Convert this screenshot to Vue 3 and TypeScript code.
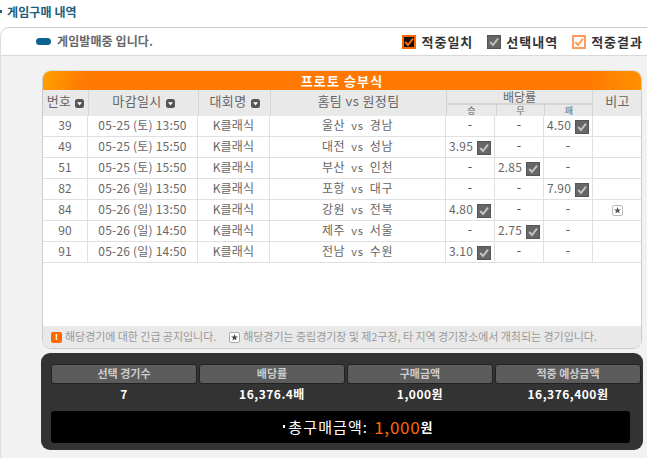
<script setup lang="ts">
interface Row { no: number; date: string; home: string; away: string; win: string; draw: string; lose: string; star?: boolean }
const rows: Row[] = [
  { no: 39, date: '05-25 (토) 13:50', home: '울산', away: '경남', win: '', draw: '', lose: '4.50' },
  { no: 49, date: '05-25 (토) 15:50', home: '대전', away: '성남', win: '3.95', draw: '', lose: '' },
  { no: 51, date: '05-25 (토) 15:50', home: '부산', away: '인천', win: '', draw: '2.85', lose: '' },
  { no: 82, date: '05-26 (일) 13:50', home: '포항', away: '대구', win: '', draw: '', lose: '7.90' },
  { no: 84, date: '05-26 (일) 13:50', home: '강원', away: '전북', win: '4.80', draw: '', lose: '', star: true },
  { no: 90, date: '05-26 (일) 14:50', home: '제주', away: '서울', win: '', draw: '2.75', lose: '' },
  { no: 91, date: '05-26 (일) 14:50', home: '전남', away: '수원', win: '3.10', draw: '', lose: '' },
]
const legend = [
  { label: '적중일치', kind: 'match' },
  { label: '선택내역', kind: 'picked' },
  { label: '적중결과', kind: 'result' },
]
const sortable = [
  { label: '번호', cls: 'h-no' },
  { label: '마감일시', cls: 'h-date' },
  { label: '대회명', cls: 'h-league' },
]
const summary = [
  { label: '선택 경기수', value: '7' },
  { label: '배당률', value: '16,376.4배' },
  { label: '구매금액', value: '1,000원' },
  { label: '적중 예상금액', value: '16,376,400원' },
]
</script>

<template>
  <div class="page">
    <h1 class="title"><span class="title-dot"></span>게임구매 내역</h1>
    <section class="panel">
      <div class="status">
        <div class="status-left"><span class="pill"></span><span class="status-text">게임발매중 입니다.</span></div>
        <ul class="legend">
          <li v-for="l in legend" :key="l.kind">
            <span class="lbox" :class="l.kind">
              <svg viewBox="0 0 14 14" width="14" height="14"><path d="M3.2 7 L6 10 L11 3.6" fill="none" stroke="currentColor" stroke-width="2"/></svg>
            </span><span class="ltext">{{ l.label }}</span>
          </li>
        </ul>
      </div>
      <div class="body">
        <div class="card">
          <div class="card-title">프로토 승부식</div>
          <div class="thead">
            <div v-for="s in sortable" :key="s.label" class="th" :class="s.cls">
              <span class="th-text">{{ s.label }}</span>
              <svg class="sort" viewBox="0 0 9 9" width="9" height="9"><rect width="9" height="9" rx="2.5" fill="#555"/><path d="M2 3.2H7L4.5 6.4Z" fill="#fff"/></svg>
            </div>
            <div class="th h-team"><span class="th-text">홈팀 vs 원정팀</span></div>
            <div class="h-odds">
              <div class="odds-top">배당률</div>
              <div class="odds-sub"><span>승</span><span>무</span><span>패</span></div>
            </div>
            <div class="th h-note"><span class="th-text">비고</span></div>
          </div>
          <div class="rows">
            <div v-for="r in rows" :key="r.no" class="row">
              <div class="c">{{ r.no }}</div>
              <div class="c">{{ r.date }}</div>
              <div class="c">K클래식</div>
              <div class="c team">{{ r.home }} <span class="vs">vs</span> {{ r.away }}</div>
              <div v-for="(o, i) in [r.win, r.draw, r.lose]" :key="i" class="c odd">
                <template v-if="o">
                  <span>{{ o }}</span>
                  <span class="tick"><svg viewBox="0 0 14 14" width="14" height="14"><path d="M3.2 7 L6 10 L11 3.6" fill="none" stroke="#c4c4c4" stroke-width="2"/></svg></span>
                </template>
                <span v-else class="dash">-</span>
              </div>
              <div class="c">
                <svg v-if="r.star" class="star" viewBox="0 0 11 11" width="11" height="11"><rect x=".5" y=".5" width="10" height="10" rx="1.5" fill="#fff" stroke="#bbb"/><path d="M5.5 2 6.4 4.5H9L6.9 6 7.7 8.6 5.5 7 3.3 8.6 4.1 6 2 4.5H4.6Z" fill="#555"/></svg>
              </div>
            </div>
          </div>
          <div class="notes">
            <span class="alert">!</span><span class="note-a">해당경기에 대한 긴급 공지입니다.</span>
            <svg class="note-star" viewBox="0 0 11 11" width="11" height="11"><rect x=".5" y=".5" width="10" height="10" rx="1.5" fill="#fff" stroke="#aaa"/><path d="M5.5 2 6.4 4.5H9L6.9 6 7.7 8.6 5.5 7 3.3 8.6 4.1 6 2 4.5H4.6Z" fill="#444"/></svg>
            <span>해당경기는 중립경기장 및 제2구장, 타 지역 경기장소에서 개최되는 경기입니다.</span>
          </div>
        </div>
        <div class="dark">
          <div class="sum-grid">
            <div v-for="s in summary" :key="s.label" class="sum-col">
              <div class="sum-label">{{ s.label }}</div>
              <div class="sum-value">{{ s.value }}</div>
            </div>
          </div>
          <div class="total">
            <span class="total-dot"></span><span>총구매금액:</span>
            <span class="total-num">1,000</span><span class="total-unit">원</span>
          </div>
        </div>
      </div>
    </section>
  </div>
</template>

<style>
html, body { margin: 0; background: #fff; }
</style>

<style scoped>
.page {
  width: 647px;
  height: 458px;
  overflow: hidden;
  font-family: "Noto Sans CJK KR", "Liberation Sans", sans-serif;
  font-size: 12px;
  color: #666;
  box-sizing: border-box;
}
.title {
  margin: 0;
  height: 27px;
  display: flex;
  align-items: center;
  font-size: 12px;
  font-weight: 700;
  color: #1d5c7a;
  letter-spacing: 0.1px;
  padding-bottom: 4px;
  box-sizing: border-box;
}
.title-dot { width: 2px; height: 3px; background: #1d5c7a; margin-right: 5px; }
.panel {
  height: 431px;
  border-top: 1px solid #ccc;
  border-left: 1px solid #ddd;
  border-top-left-radius: 9px;
  box-sizing: border-box;
}
.status {
  height: 28px;
  box-sizing: border-box;
  border-bottom: 1px solid #d8d8d8;
  display: flex;
  justify-content: space-between;
  align-items: center;
  padding: 0 4px 0 35px;
}
.status-left {
  display: flex;
  align-items: center;
  gap: 6px;
  font-weight: 700;
  color: #666;
  letter-spacing: 0.1px;
  font-size: 12px;
}
.status-text { padding-bottom: 2px; }
.pill { width: 15px; height: 7px; border-radius: 4px; background: #0a648f; }
.legend {
  display: flex;
  list-style: none;
  margin: 0;
  padding: 0;
  gap: 14px;
  font-weight: 700;
  color: #333;
  font-size: 13px;
  letter-spacing: 1px;
}
.legend li { display: flex; align-items: center; gap: 5px; }
.ltext { padding-bottom: 1px; }
.lbox { width: 14px; height: 14px; box-sizing: border-box; display: flex; align-items: center; justify-content: center; }
.lbox svg { flex: none; }
.lbox.match { background: #111; border: 2px solid #f60; color: #f60; }
.lbox.picked { background: #666; border: 1px solid #555; color: #bbb; }
.lbox.result { background: #fff; border: 2px solid #ff9c5c; color: #ff9c5c; }
.body {
  height: 403px;
  background: #f2f2f2;
  padding: 14px 0 0 41px;
  box-sizing: border-box;
}
.card {
  width: 600px;
  height: 279px;
  box-sizing: border-box;
  border: 1px solid #ccc;
  border-top-color: #ddd;
  border-radius: 9px;
  overflow: hidden;
  background: #fff;
  display: flex;
  flex-direction: column;
}
.card-title {
  height: 19px;
  flex: none;
  background: linear-gradient(100deg, #ffa000 0, #ff7a00 7%, #ff7800 90%, #ff9000 100%);
  color: #fff;
  font-weight: 700;
  font-size: 13px;
  letter-spacing: 1.1px;
  text-align: center;
  line-height: 19px;
}
.thead {
  flex: none;
  height: 26px;
  display: grid;
  grid-template-columns: 46px 110px 72px 176px 146px 49px;
  background: #e9e9e9;
  font-size: 13px;
  color: #666;
  letter-spacing: 0.4px;
}
.th {
  display: flex;
  align-items: center;
  justify-content: center;
  gap: 4px;
  border-right: 1px solid #d4d4d4;
}
.th-text { padding-bottom: 6px; }
.h-note { border-right: 0; }
.sort { flex: none; }
.h-odds { border-right: 1px solid #d4d4d4; display: flex; flex-direction: column; }
.odds-top { height: 15px; font-size: 12px; letter-spacing: 0; line-height: 13px; text-align: center; border-bottom: 2px solid #d4d4d4; box-sizing: border-box; }
.odds-sub { flex: 1; display: grid; grid-template-columns: 49px 48px 49px; font-size: 9px; text-align: center; line-height: 11px; color: #666; letter-spacing: 0; }
.odds-sub span + span { border-left: 1px solid #d4d4d4; }
.rows { flex: 1; }
.row {
  height: 21px;
  box-sizing: border-box;
  border-bottom: 1px solid #e0e0e0;
  display: grid;
  grid-template-columns: 45px 110px 72px 176px 49px 49px 49px 48px;
}
.c {
  display: flex;
  align-items: center;
  justify-content: center;
  border-right: 1px solid #e0e0e0;
  color: #666;
  font-size: 12px;
  letter-spacing: 0.2px;
  white-space: pre;
  padding-bottom: 4px;
  box-sizing: border-box;
}
.c:last-child { border-right: 0; }
.vs { font-size: 11px; margin: 0 6px; }
.team { white-space: normal; letter-spacing: 0.7px; }
.odd { gap: 4px; }
.tick { width: 14px; height: 14px; background: #666; display: block; outline: 1px solid #555; outline-offset: -1px; margin-bottom: -4px; }
.tick svg { display: block; }
.dash { color: #555; font-family: "DejaVu Sans", sans-serif; }
.notes {
  flex: none;
  height: 22px;
  background: #e9e9e9;
  display: flex;
  align-items: center;
  padding-left: 8px;
  color: #999;
  font-size: 11px;
  letter-spacing: -0.05px;
  white-space: nowrap;
}
.notes span:not(.alert) { padding-bottom: 2px; }
.alert {
  width: 11px;
  height: 11px;
  border-radius: 2px;
  background: #f60;
  color: #fff;
  font: 700 9px/11px "Liberation Sans", sans-serif;
  text-align: center;
  margin-right: 3px;
}
.note-a { margin-right: 13px; }
.note-star { flex: none; margin-right: 3px; }
.dark {
  margin-top: 4px;
  margin-left: -1px;
  width: 602px;
  height: 97px;
  background: #333;
  border-radius: 9px;
  padding: 11px 10px 0;
  box-sizing: border-box;
}
.sum-grid { display: grid; grid-template-columns: repeat(4, 146px); gap: 2px; width: 590px; }
.sum-label {
  height: 20px;
  line-height: 17px;
  background: #5c5c5c;
  border: 1px solid #222;
  border-radius: 3px;
  box-sizing: border-box;
  text-align: center;
  color: #ccc;
  font-weight: 700;
  font-size: 11px;
}
.sum-value {
  height: 27px;
  line-height: 18px;
  padding-top: 1px;
  box-sizing: border-box;
  text-align: center;
  color: #fff;
  font-weight: 700;
  font-size: 12px;
  letter-spacing: 0.5px;
}
.total {
  width: 579px;
  height: 32px;
  background: #000;
  border-radius: 3px;
  display: flex;
  align-items: center;
  justify-content: center;
  color: #fff;
  font-size: 15px;
  letter-spacing: 1.1px;
  padding: 0 0 2px 36px;
  box-sizing: border-box;
}
.total-dot { width: 2px; height: 3px; background: #fff; margin-right: 3px; }
.total-num { color: #f60; font-size: 17px; margin-left: 6px; letter-spacing: 0.8px; }
.total-unit { font-weight: 700; font-size: 13px; }
.star { flex: none; margin-bottom: -4px; }
</style>
